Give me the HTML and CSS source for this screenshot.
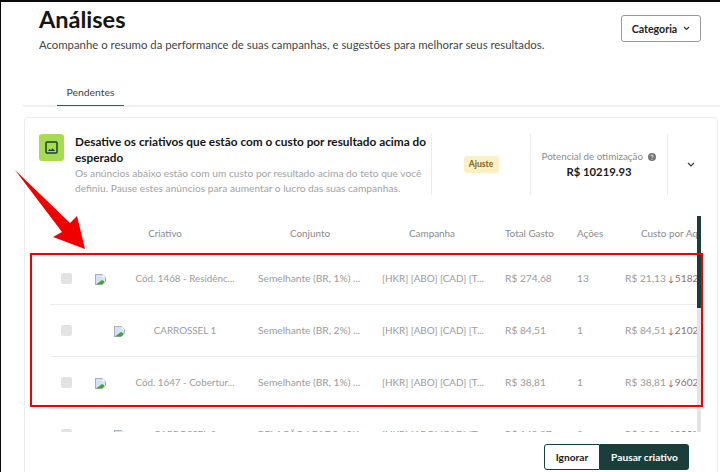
FILE: index.html
```html
<!DOCTYPE html>
<html lang="pt-BR">
<head>
<meta charset="utf-8">
<title>Análises</title>
<link rel="stylesheet" href="styles.css">
</head>
<body>
<div class="page">
  <header class="top">
    <div>
      <h1>Análises</h1>
      <p class="sub">Acompanhe o resumo da performance de suas campanhas, e sugestões para melhorar seus resultados.</p>
    </div>
    <button class="cat">Categoria
      <svg width="7" height="5" viewBox="0 0 7 5"><path d="M1 1l2.5 2.5L6 1" fill="none" stroke="#333" stroke-width="1.1"/></svg>
    </button>
  </header>
  <nav class="tabs"><span class="tab">Pendentes</span></nav>
  <section class="card">
    <div class="summary">
      <div class="icon">
        <svg width="13" height="13" viewBox="0 0 13 13"><rect x="1" y="1" width="11" height="11" rx="1" fill="none" stroke="#1a3f3a" stroke-width="1.5"/><path d="M3 10l1.7-2.2L6 9.2l1.6-2L10 10z" fill="#1a3f3a"/></svg>
      </div>
      <div class="text">
        <h2>Desative os criativos que estão com o custo por resultado acima do esperado</h2>
        <p>Os anúncios abaixo estão com um custo por resultado acima do teto que você definiu. Pause estes anúncios para aumentar o lucro das suas campanhas.</p>
      </div>
      <div class="badge-cell"><span class="badge">Ajuste</span></div>
      <div class="potential">
        <div class="pot-label">Potencial de otimização
          <svg class="help" width="8" height="8" viewBox="0 0 8 8"><circle cx="4" cy="4" r="4" fill="#777"/><path d="M2.8 3.1c0-1.5 2.4-1.5 2.4 0 0 .8-1.2.8-1.2 1.7" fill="none" stroke="#fff" stroke-width=".8"/><circle cx="4" cy="6.2" r=".5" fill="#fff"/></svg>
        </div>
        <div class="pot-value">R$ 10219.93</div>
      </div>
      <div class="expand">
        <svg width="8" height="5" viewBox="0 0 8 5"><path d="M1 1l3 3 3-3" fill="none" stroke="#333" stroke-width="1.1"/></svg>
      </div>
    </div>
    <div class="table-wrap">
      <div class="table">
        <div class="row head">
          <span></span>
          <span class="c-cr">Criativo</span>
          <span class="h-conj">Conjunto</span>
          <span class="h-camp">Campanha</span>
          <span>Total Gasto</span>
          <span>Ações</span>
          <span class="h-cost">Custo por Aquisição</span>
        </div>
        <div class="row">
          <span class="check"></span>
          <span class="c-cr"><svg class="broken" viewBox="0 0 11 11"><use href="#br"/></svg><span>Cód. 1468 - Residênc...</span></span>
          <span class="c-conj">Semelhante (BR, 1%) ...</span>
          <span class="c-camp">[HKR] [ABO] [CAD] [T...</span>
          <span>R$ 274,68</span>
          <span>13</span>
          <span class="cost">R$ 21,13<i>↓</i><b>5182%</b></span>
        </div>
        <div class="row">
          <span class="check"></span>
          <span class="c-cr"><svg class="broken" viewBox="0 0 11 11"><use href="#br"/></svg><span>CARROSSEL 1</span></span>
          <span class="c-conj">Semelhante (BR, 2%) ...</span>
          <span class="c-camp">[HKR] [ABO] [CAD] [T...</span>
          <span>R$ 84,51</span>
          <span>1</span>
          <span class="cost">R$ 84,51<i>↓</i><b>2102%</b></span>
        </div>
        <div class="row">
          <span class="check"></span>
          <span class="c-cr"><svg class="broken" viewBox="0 0 11 11"><use href="#br"/></svg><span>Cód. 1647 - Cobertur...</span></span>
          <span class="c-conj">Semelhante (BR, 1%) ...</span>
          <span class="c-camp">[HKR] [ABO] [CAD] [T...</span>
          <span>R$ 38,81</span>
          <span>1</span>
          <span class="cost">R$ 38,81<i>↓</i><b>9602%</b></span>
        </div>
        <div class="row">
          <span class="check"></span>
          <span class="c-cr"><svg class="broken" viewBox="0 0 11 11"><use href="#br"/></svg><span>CARROSSEL 2</span></span>
          <span class="c-conj">RELAÇÃO LEADS 60K ...</span>
          <span class="c-camp">[HKR] [ABO] [CAD] [T...</span>
          <span>R$ 149,97</span>
          <span>2</span>
          <span class="cost">R$ 9,00<i>↓</i><b>1800%</b></span>
        </div>
      </div>
      <div class="scroll"><div class="thumb"></div></div>
    </div>
    <div class="actions">
      <button class="ignore">Ignorar</button>
      <button class="pause">Pausar criativo</button>
    </div>
  </section>
</div>
<svg class="annot" width="720" height="472" viewBox="0 0 720 472">
  <defs>
    <g id="br">
      <path d="M.4.4h7.2l3 3v7.2H.4z" fill="#d5e1f5" stroke="#8f979f" stroke-width=".8"/>
      <path d="M1 10.5L7 6l2.5 1.5V10.5z" fill="#45a33a"/>
      <path d="M7.6.4v3h3zM7 11l4-4v4z" fill="#fff"/>
    </g>
  </defs>
  <rect class="redbox" x="31" y="254" width="671" height="152"/>
  <polygon class="arrow" points="15,170 70,223 77,216 85,249 53,237 62,232"/>
</svg>
</body>
</html>
```
FILE: styles.css
```css
* { box-sizing: border-box; }
html, body { margin: 0; height: 472px; overflow: hidden; }
body {
  font-family: Lato, "Noto Sans", sans-serif;
  background: #fff;
  border-top: 2px solid #0a0a0a;
  border-left: 1px solid #0a0a0a;
  color: #1b1b1b;
}
.page { width: 719px; height: 470px; overflow: hidden; }
.top {
  display: flex;
  justify-content: space-between;
  padding: 5px 19px 0 38px;
  height: 70px;
}
h1 { margin: 0; font-size: 23.5px; line-height: 25px; font-weight: 700; color: #151515; }
.sub { margin: 5px 0 0; font-size: 11.35px; line-height: 15px; color: #444; white-space: nowrap; }
.cat {
  width: 80px; height: 27px; margin-top: 8px;
  display: flex; align-items: center; justify-content: center; gap: 6px;
  background: #fff; border: 1px solid #999; border-radius: 3px;
  font: 700 10.6px Lato, sans-serif; color: #222;
}
.tabs {
  margin: 0 0 0 22px; height: 35px;
  border-bottom: 2px solid #f0f0f0;
  padding-left: 34px;
}
.tab {
  display: block; width: 67px; height: 34px; padding-top: 13px; line-height: 14px;
  text-align: center; font-size: 10.4px; color: #444;
  border-bottom: 1px solid #3f5a55;
}
.card {
  margin: 10px 2px 0 23px; height: 360px;
  border: 1px solid #ececec; border-radius: 4px;
  padding-top: 16px;
}
.summary { display: flex; height: 61px; }
.icon {
  width: 25px; height: 27px; margin-left: 14px; border-radius: 3px;
  background: #a7dc4e; display: flex; align-items: center; justify-content: center; flex: none;
}
.text { width: 368px; padding: 0 4px 0 11px; flex: none; border-right: 1px solid #ececec; }
h2 { margin: 0; font-size: 11.8px; line-height: 16px; font-weight: 700; color: #151515; }
.text p { margin: 0; font-size: 10.2px; line-height: 14.5px; color: #a3a3a3; }
.badge-cell { width: 99px; flex: none; display: flex; justify-content: center; align-items: center; border-right: 1px solid #ececec; }
.badge { background: #fbf0c4; color: #7a6320; font-size: 8.6px; font-weight: 700; width: 35px; height: 17px; line-height: 16px; text-align: center; border-radius: 3px; }
.potential { width: 137px; flex: none; text-align: center; border-right: 1px solid #ececec; padding-top: 15px; }
.pot-label { font-size: 9.8px; line-height: 14px; color: #8c8c8c; white-space: nowrap; }
.help { margin-left: 3px; vertical-align: -1px; }
.pot-value { font-size: 11.3px; line-height: 17px; font-weight: 700; color: #1b1b1b; }
.expand { flex: 1; display: flex; align-items: center; justify-content: center; padding-right: 4px; }
.table-wrap { position: relative; height: 216px; margin-top: 21px; width: 676px; overflow: hidden; }
.table { width: 647px; margin-left: 25px; overflow: hidden; height: 216px; }
.row {
  display: grid;
  grid-template-columns: 40px 150px 138px 127px 72px 48px 200px;
  width: 800px;
  height: 52px;
  padding-bottom: 1px;
  align-items: center;
  font-size: 10.2px;
  color: #9b9b9b;
  border-bottom: 1px solid #ececec;
  white-space: nowrap;
}
.row.head { height: 37px; border-bottom: 0; padding-bottom: 3px; color: #8a8a8a; font-size: 9.9px; }
.row:nth-child(2) { border-top: 1px solid #ececec; padding-bottom: 2px; }
.check { width: 11px; height: 11px; margin-left: 11px; border-radius: 2px; background: #e3e3e3; }
.c-cr { display: flex; justify-content: center; align-items: center; gap: 29px; font-size: 9.8px; }
.broken { width: 11px; height: 11px; flex: none; margin-top: 2px; }
.c-conj { padding-left: 18px; }
.c-camp { padding-left: 4px; font-size: 9.9px; }
.h-conj { padding-left: 50px; }
.h-camp { padding-left: 31px; }
.h-cost { padding-left: 16px; }
.cost i { font-style: normal; font-size: 8px; color: #7a5a50; margin: 0 1px 0 2px; }
.cost b { font-weight: 400; color: #8f6f70; }
.scroll { position: absolute; top: 0; left: 672px; width: 4px; height: 216px; background: #e4e4e4; }
.thumb { width: 4px; height: 92px; background: #1a3f3a; }
.actions { display: flex; justify-content: flex-end; margin-top: 12px; padding-right: 28px; }
button { cursor: pointer; }
.ignore {
  width: 56px; height: 26px; background: #fff; border: 1px solid #1a3f3a; border-radius: 3px 0 0 3px;
  font: 700 10.2px Lato, sans-serif; color: #1b1b1b;
}
.pause {
  width: 89px; height: 26px; background: #1a3f3a; border: 0; border-radius: 0 3px 3px 0;
  font: 700 10.2px Lato, sans-serif; color: #fff;
}
.annot { position: absolute; left: 0; top: 0; pointer-events: none; }
.redbox { fill: none; stroke: #f00000; stroke-width: 2; }
.arrow { fill: #f00000; }
```
